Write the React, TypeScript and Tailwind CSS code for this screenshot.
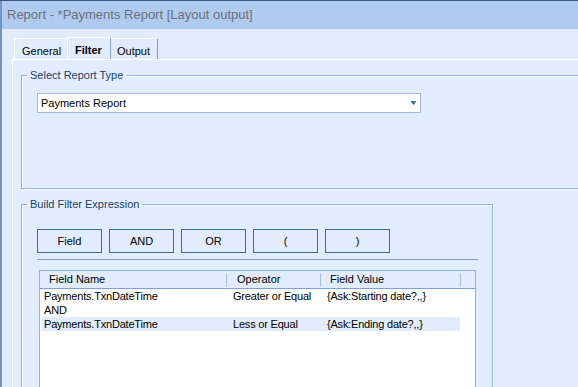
const columns = ['Field Name', 'Operator', 'Field Value'];

const rows = [
  { field: 'Payments.TxnDateTime', op: 'Greater or Equal', value: '{Ask:Starting date?,,}', selected: false },
  { field: 'AND', op: '', value: '', selected: false },
  { field: 'Payments.TxnDateTime', op: 'Less or Equal', value: '{Ask:Ending date?,,}', selected: true },
];

const buttons = ['Field', 'AND', 'OR', '(', ')'];

export default function App() {
  return (
    <div className="w-[578px] h-[387px] overflow-hidden border-t border-[#3b5b84] bg-[#e1edfe] font-['Liberation_Sans',Arial,sans-serif] text-[11px] text-black">
      <div className="h-full border-l-2 border-[#7495c8] flex flex-col">
        {/* Title bar */}
        <div className="h-[28px] shrink-0 bg-[#b0cbf0] pl-[5px] flex items-center text-[13px] text-[#6d6f78]">
          Report - *Payments Report [Layout output]
        </div>

        {/* Tabs */}
        <div className="h-[30px] shrink-0 flex items-end pl-[12px]">
          <div className="w-[53px] h-[21px] border-t border-l border-white pl-[7px] pt-[6px] leading-[13px]">General</div>
          <div className="w-[44px] h-[22px] border-t border-l border-r border-white border-r-[#8ba8d2] pl-[7px] pt-[6px] leading-[13px] font-bold">
            Filter
          </div>
          <div className="w-[47px] h-[21px] border-t border-r border-white border-r-[#7f9fcf] pl-[6px] pt-[6px] leading-[13px]">Output</div>
        </div>

        {/* Tab panel */}
        <div className="flex-1 w-[640px] ml-[10px] border-t border-l border-white pl-[8px] pt-[9px]">
          {/* Select Report Type */}
          <fieldset className="border border-[#91b2e4] shadow-[inset_1px_1px_0_#fff,1px_1px_0_#fff] pb-[75px]">
            <legend className="ml-[5px] px-[3px] leading-[13px] text-[#15406f]">Select Report Type</legend>
            <div className="pl-[15px]">
              <div className="mt-[11px] w-[384px] h-[20px] border border-[#a5bad8] bg-white flex items-center justify-between pl-[3px] pr-[4px]">
                <span>Payments Report</span>
                <svg width="5" height="4" viewBox="0 0 5 4" className="block">
                  <path d="M0 0h5v1H0z M0 1h5L2.5 4z" fill="#4a6ea8" />
                </svg>
              </div>
            </div>
          </fieldset>

          {/* Build Filter Expression */}
          <fieldset className="mt-[9px] w-[472px] border border-[#91b2e4] shadow-[inset_1px_1px_0_#fff,1px_1px_0_#fff] pb-[20px]">
            <legend className="ml-[5px] px-[3px] leading-[13px] text-[#15406f]">Build Filter Expression</legend>
            <div className="pl-[15px] pr-[14px]">
              <div className="mt-[18px] flex gap-[7px]">
                {buttons.map((b) => (
                  <div
                    key={b}
                    className="w-[65px] h-[24px] border border-[#3f6c9e] flex items-center justify-center"
                  >
                    {b}
                  </div>
                ))}
              </div>
              <div className="mt-[6px] h-px bg-[#7d9abd]" />

              <div className="mt-[10px] ml-[2px] w-[437px] h-[160px] border border-[#8fb0e0] bg-white">
                <div className="h-[18px] bg-[#e1edfe] border-b border-[#7ea1d8] flex items-center">
                  <div className="w-[186px] pl-[9px]">{columns[0]}</div>
                  <div className="w-px h-[14px] bg-[#a8c0e4]" />
                  <div className="w-[93px] pl-[10px]">{columns[1]}</div>
                  <div className="w-px h-[14px] bg-[#a8c0e4]" />
                  <div className="w-[139px] pl-[9px]">{columns[2]}</div>
                  <div className="w-px h-[14px] bg-[#a8c0e4]" />
                </div>
                {rows.map((r, i) => (
                  <div
                    key={i}
                    className={`ml-[2px] w-[418px] h-[14px] leading-[14px] flex tracking-[-0.2px] ${r.selected ? 'bg-[#e1edfe]' : ''}`}
                  >
                    <div className="w-[184px] pl-[2px]">{r.field}</div>
                    <div className="w-[94px] pl-[7px]">{r.op}</div>
                    <div className="w-[140px] pl-[7px]">{r.value}</div>
                  </div>
                ))}
              </div>
            </div>
          </fieldset>
        </div>
      </div>
    </div>
  );
}
